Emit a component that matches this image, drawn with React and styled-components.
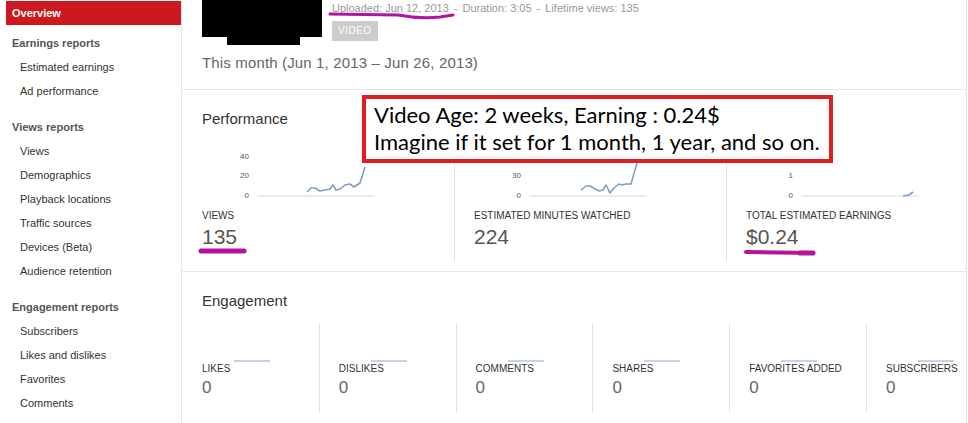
import React from 'react';
import styled, { createGlobalStyle } from 'styled-components';

const GlobalStyle = createGlobalStyle`
  html, body {
    margin: 0;
    padding: 0;
    background: #fff;
  }
  body {
    font-family: "Liberation Sans", Arial, sans-serif;
    color: #333;
  }
`;

const Page = styled.div`
  position: relative;
  display: flex;
  width: 968px;
  height: 423px;
  overflow: hidden;
  background: #fff;
`;

const Sidebar = styled.aside`
  flex-shrink: 0;
  width: 182px;
  box-sizing: border-box;
  padding-left: 6px;
  border-right: 1px solid #e6e6e6;
`;

const OverviewItem = styled.div`
  margin-top: 1px;
  height: 24px;
  padding-left: 6px;
  background: #cc181e;
  color: #fff;
  font-size: 11px;
  font-weight: bold;
  line-height: 24px;
`;

const NavGroup = styled.div`
  margin-top: ${p => (p.$first ? 6 : 12)}px;
`;

const GroupTitle = styled.div`
  padding-left: 6px;
  font-size: 11px;
  font-weight: bold;
  line-height: 24px;
  color: #555;
`;

const NavLink = styled.div`
  padding-left: 14px;
  font-size: 11px;
  line-height: 24px;
  color: #333;
`;

const Main = styled.main`
  flex-shrink: 0;
  width: 785px;
  box-sizing: border-box;
  border-right: 1px solid #e6e6e6;
  overflow: hidden;
`;

const Header = styled.header`
  height: 90px;
  box-sizing: border-box;
  padding-left: 20px;
  border-bottom: 1px solid #e6e6e6;
`;

const HeaderTop = styled.div`
  display: flex;
  gap: 10px;
`;

const Thumb = styled.div`
  display: flex;
  flex-direction: column;
`;

const ThumbBlock = styled.div`
  width: 120px;
  height: 37px;
  background: #000;
`;

const ThumbTab = styled.div`
  width: 73px;
  height: 8px;
  margin-left: 25px;
  background: #000;
`;

const Meta = styled.div`
  padding-top: 1px;
`;

const MetaLine = styled.div`
  font-size: 11px;
  line-height: 14px;
  color: #999;
  white-space: nowrap;
`;

const Sep = styled.span`
  margin: 0 5px;
`;

const Badge = styled.span`
  display: inline-block;
  margin-top: 6px;
  height: 20px;
  padding: 0 6px;
  background: #ccc;
  color: #fff;
  font-size: 10px;
  line-height: 20px;
  letter-spacing: 0.5px;
`;

const DateRange = styled.div`
  margin-top: 9px;
  font-size: 15px;
  line-height: 18px;
  letter-spacing: 0.15px;
  color: #666;
`;

const Section = styled.section`
  padding-top: 20px;
  padding-bottom: ${p => p.$bottom || 0}px;
  border-bottom: ${p => (p.$last ? 'none' : '1px solid #e6e6e6')};
`;

const SectionTitle = styled.h2`
  margin: 0;
  padding-left: 20px;
  font-size: 15px;
  font-weight: normal;
  line-height: 18px;
  color: #333;
`;

const MetricsGrid = styled.div`
  display: grid;
  grid-template-columns: 272px 272px 1fr;
  margin-top: 22px;
`;

const MetricCol = styled.div`
  height: 112px;
  box-sizing: border-box;
  padding-left: ${p => (p.$divider ? 19 : 20)}px;
  border-left: ${p => (p.$divider ? '1px solid #e6e6e6' : 'none')};
`;

const ChartSvg = styled.svg`
  display: block;
  margin-left: 27px;
`;

const MetricLabel = styled.div`
  margin-top: 8px;
  font-size: 10px;
  line-height: 12px;
  color: #333;
  text-transform: uppercase;
  white-space: nowrap;
`;

const MetricValue = styled.div`
  margin-top: 4px;
  font-size: 21px;
  line-height: 22px;
  color: #555;
`;

const EngGrid = styled.div`
  display: grid;
  grid-template-columns: repeat(6, 136.8px);
  margin-top: 13px;
`;

const EngCol = styled.div`
  height: 90px;
  box-sizing: border-box;
  padding: 37px 0 0 ${p => (p.$divider ? 19 : 20)}px;
  border-left: ${p => (p.$divider ? '1px solid #e6e6e6' : 'none')};
`;

const Spark = styled.div`
  width: 36px;
  height: 2px;
  margin-left: 32px;
  background: #c3d4e9;
`;

const EngLabel = styled.div`
  margin-top: 1px;
  font-size: 10px;
  line-height: 12px;
  color: #333;
  text-transform: uppercase;
  white-space: nowrap;
`;

const EngValue = styled.div`
  margin-top: 3px;
  font-size: 17px;
  line-height: 20px;
  color: #666;
`;

const Callout = styled.div`
  position: absolute;
  left: 362px;
  top: 95px;
  width: 471px;
  height: 68px;
  box-sizing: border-box;
  padding: 2px 0 0 8px;
  border: 4px solid #e31b23;
  background: #fff;
  font-family: Lato, "Open Sans", sans-serif;
  color: #000;
`;

const CalloutLine = styled.div`
  font-size: 22px;
  line-height: 27px;
  white-space: nowrap;
`;

const Marks = styled.svg`
  position: absolute;
  left: 0;
  top: 0;
  pointer-events: none;
`;

const nav = [
  { title: 'Earnings reports', items: ['Estimated earnings', 'Ad performance'] },
  {
    title: 'Views reports',
    items: ['Views', 'Demographics', 'Playback locations', 'Traffic sources', 'Devices (Beta)', 'Audience retention'],
  },
  { title: 'Engagement reports', items: ['Subscribers', 'Likes and dislikes', 'Favorites', 'Comments'] },
];

const metrics = [
  {
    label: 'Views',
    value: '135',
    ticks: ['40', '20', '0'],
    points: '78,42 82,38 86,38 91,41 96,40 101,39 104,35 107,40 111,39 116,35 121,34 125,37 131,33 136,17',
  },
  {
    label: 'Estimated minutes watched',
    value: '224',
    ticks: ['60', '30', '0'],
    points: '80,40 85,36 89,36 94,39 98,41 102,40 105,35 109,43 113,38 118,34 121,35 125,34 130,34 136,13',
  },
  {
    label: 'Total estimated earnings',
    value: '$0.24',
    ticks: ['2', '1', '0'],
    points: '130,46 136,45 140,42',
  },
];

const engagement = ['Likes', 'Dislikes', 'Comments', 'Shares', 'Favorites added', 'Subscribers'];

function Chart({ ticks, points }) {
  const ys = [9, 28, 48];
  return (
    <ChartSvg width="160" height="52" viewBox="0 0 160 52">
      {ticks.map((t, i) => (
        <text key={t} x="20" y={ys[i]} textAnchor="end" fontSize="8" fill="#555" fontFamily="Liberation Sans, Arial, sans-serif">
          {t}
        </text>
      ))}
      <line x1="28" y1="46" x2="146" y2="46" stroke="#ececec" strokeWidth="2" />
      <polyline points={points} fill="none" stroke="#7d9ec9" strokeWidth="1.6" strokeLinejoin="round" />
    </ChartSvg>
  );
}

export default function App() {
  return (
    <>
      <GlobalStyle />
      <Page>
        <Sidebar>
          <OverviewItem>Overview</OverviewItem>
          {nav.map((group, gi) => (
            <NavGroup key={group.title} $first={gi === 0}>
              <GroupTitle>{group.title}</GroupTitle>
              {group.items.map(item => (
                <NavLink key={item}>{item}</NavLink>
              ))}
            </NavGroup>
          ))}
        </Sidebar>

        <Main>
          <Header>
            <HeaderTop>
              <Thumb>
                <ThumbBlock />
                <ThumbTab />
              </Thumb>
              <Meta>
                <MetaLine>
                  Uploaded: Jun 12, 2013<Sep>-</Sep>Duration: 3:05<Sep>-</Sep>Lifetime views: 135
                </MetaLine>
                <Badge>VIDEO</Badge>
              </Meta>
            </HeaderTop>
            <DateRange>This month (Jun 1, 2013 – Jun 26, 2013)</DateRange>
          </Header>

          <Section $bottom={9}>
            <SectionTitle>Performance</SectionTitle>
            <MetricsGrid>
              {metrics.map((m, i) => (
                <MetricCol key={m.label} $divider={i > 0}>
                  <Chart ticks={m.ticks} points={m.points} />
                  <MetricLabel>{m.label}</MetricLabel>
                  <MetricValue>{m.value}</MetricValue>
                </MetricCol>
              ))}
            </MetricsGrid>
          </Section>

          <Section $last>
            <SectionTitle>Engagement</SectionTitle>
            <EngGrid>
              {engagement.map((label, i) => (
                <EngCol key={label} $divider={i > 0}>
                  <Spark />
                  <EngLabel>{label}</EngLabel>
                  <EngValue>0</EngValue>
                </EngCol>
              ))}
            </EngGrid>
          </Section>
        </Main>

        <Callout>
          <CalloutLine>Video Age: 2 weeks, Earning : 0.24$</CalloutLine>
          <CalloutLine>Imagine if it set for 1 month, 1 year, and so on.</CalloutLine>
        </Callout>

        <Marks width="968" height="423" viewBox="0 0 968 423">
          <g fill="none" stroke="#b3149f" strokeLinecap="round">
            <path d="M330 14 L398 15 Q420 19 440 17 L453 15" strokeWidth="3" />
            <path d="M201 251 L244 251" strokeWidth="5" />
            <path d="M746 252 L812 253" strokeWidth="4" />
            <path d="M800 253 L813 253" strokeWidth="5" />
          </g>
        </Marks>
      </Page>
    </>
  );
}
